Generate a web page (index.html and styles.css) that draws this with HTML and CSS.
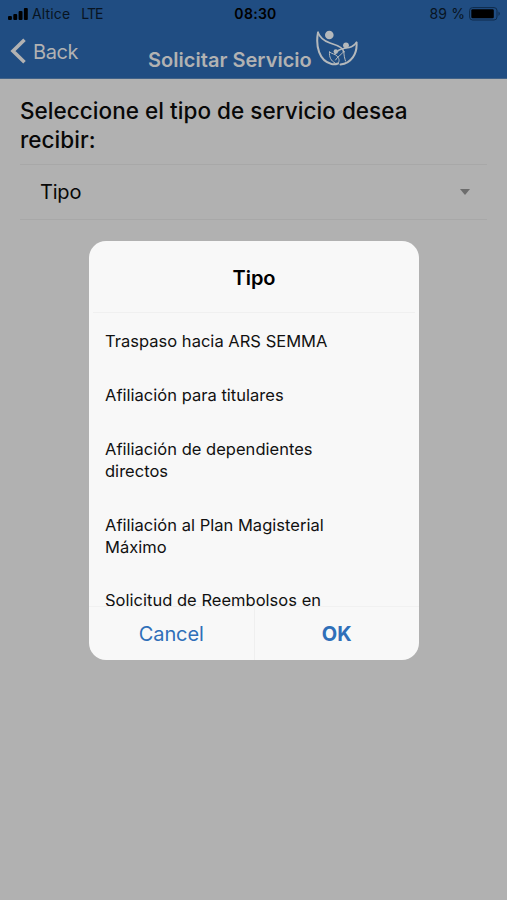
FILE: index.html
```html
<!DOCTYPE html>
<html lang="es">
<head>
<meta charset="utf-8">
<title>Solicitar Servicio</title>
<link rel="stylesheet" href="styles.css">
</head>
<body>
<header class="header">
  <div class="status">
    <div class="status-left">
      <svg class="signal" width="20" height="12" viewBox="0 0 20 12"><rect x="0" y="8" width="3.900" height="4" rx="1"/><rect x="5.300" y="6" width="3.900" height="6" rx="1"/><rect x="10.600" y="3" width="3.900" height="9" rx="1"/><rect x="15.900" y="0" width="3.900" height="12" rx="1"/></svg>
      <span class="carrier">Altice</span>
      <span class="network">LTE</span>
    </div>
    <span class="clock">08:30</span>
    <div class="status-right">
      <span class="charge">89 %</span>
      <svg class="battery" width="32" height="14" viewBox="0 0 32 14"><rect x=".6" y=".6" width="27.4" height="12.4" rx="3" fill="none" stroke="#0e2b4b"/><rect x="2.3" y="2.3" width="22.5" height="9" rx="1.2" fill="#000"/><path d="M29.5 4.6q2.6 2.2 0 4.4z" fill="#0e2b4b"/></svg>
    </div>
  </div>
  <nav class="nav">
    <a class="back">
      <svg width="16" height="26" viewBox="0 0 16 26"><path d="M14.500 1.800L3 13L14.500 24.200" fill="none" stroke="#b2b2b2" stroke-width="3.600"/></svg>
      <span>Back</span>
    </a>
    <div class="brand">
      <h1 class="title">Solicitar Servicio</h1>
      <svg class="logo" width="42" height="37" viewBox="0 0 42 37">
        <g fill="none" stroke="#b5b9bc" stroke-linecap="round" stroke-linejoin="round">
          <path d="M2 2.500C-.5 16 3 31 15.500 34C18 34.700 20 34.300 22 33.500" stroke-width="2"/>
          <path d="M2 2.500C4 8 8 11 14 13C22 15.500 28 18 27.500 21.500" stroke-width="1.800"/>
          <path d="M40.500 12.500C41.500 24 35 33.500 24.500 34.500" stroke-width="2"/>
          <path d="M40.500 12.500C37 17 34 17.500 30 18C24 19 20.500 21 19 24" stroke-width="1.600"/>
          <path d="M13.500 22C13 27 15 31 19 33M13.500 22C16 24 19 24 21 26C23 28 24 31 22 33.500M28 21.500C27.500 25 29 29 29.500 31M28 21.500C25 25 21 27 19.500 30" stroke-width="1"/>
        </g>
        <circle cx="13.300" cy="5" r="4.300" fill="#b5b9bc"/><circle cx="30" cy="15.300" r="2.900" fill="#b5b9bc"/><circle cx="19.800" cy="21.500" r="2.200" fill="#b5b9bc"/>
      </svg>
    </div>
  </nav>
</header>
<main class="page">
  <h2 class="question">Seleccione el tipo de servicio desea recibir:</h2>
  <div class="select"><span>Tipo</span><i class="caret"></i></div>
</main>
<div class="overlay">
  <section class="dialog">
    <h2 class="dialog-title">Tipo</h2>
    <ul class="options">
      <li><span>Traspaso hacia ARS SEMMA</span></li>
      <li><span>Afiliación para titulares</span></li>
      <li><span>Afiliación de dependientes directos</span></li>
      <li><span>Afiliación al Plan Magisterial Máximo</span></li>
      <li><span>Solicitud de Reembolsos en</span></li>
    </ul>
    <div class="actions"><button class="cancel">Cancel</button><button class="ok">OK</button></div>
  </section>
</div>
</body>
</html>
```

FILE: styles.css
```css
* { box-sizing: border-box; }
body {
  margin: 0;
  height: 900px;
  overflow: hidden;
  background: #b1b1b1;
  color: #080808;
  font-family: Inter, "Liberation Sans", sans-serif;
}
h1, h2, ul { margin: 0; padding: 0; }
span, h1, button { white-space: nowrap; }
.header { height: 79px; background: #204d82; border-bottom: 1px solid #416287; }
.status {
  display: grid;
  grid-template-columns: 1fr auto 1fr;
  align-items: center;
  height: 27px;
  padding: 0 6px 0 8px;
  color: #081421;
  font-size: 14px;
}
.status-left, .status-right { display: flex; align-items: center; }
.signal { fill: #000; }
.carrier { margin-left: 4px; letter-spacing: .15px; }
.network { margin-left: 11px; letter-spacing: -.9px; }
.clock { color: #000; font-weight: 600; letter-spacing: .3px; padding-left: 2px; }
.status-right { justify-content: flex-end; }
.charge { margin-right: 4px; letter-spacing: .1px; }
.nav { display: flex; height: 51px; color: #b2b2b2; }
.back { display: flex; align-items: center; width: 148px; height: 48px; padding-left: 10px; font-size: 20px; }
.back span { margin: 1px 0 0 7px; letter-spacing: -.4px; }
.brand { display: flex; }
.title { padding-top: 19px; font-size: 20px; line-height: 28px; font-weight: 600; letter-spacing: .03px; }
.logo { margin: 3px 0 0 4px; }
.page { padding: 17px 20px; }
.question { font-size: 22.5px; line-height: 29px; font-weight: 500; letter-spacing: .04px; width: 420px; }
.select {
  display: flex;
  align-items: center;
  justify-content: space-between;
  height: 56px;
  margin-top: 10px;
  padding: 0 17px 0 20px;
  border: solid #a8a8a8;
  border-width: 1px 0;
  font-size: 20px;
  letter-spacing: -.2px;
}
.caret { border: solid transparent; border-width: 6px 5.5px 0; border-top-color: #6d6d6d; }
.overlay { position: absolute; inset: 0; }
.dialog {
  display: flex;
  flex-direction: column;
  width: 330px;
  height: 419px;
  margin: 241px 0 0 89px;
  overflow: hidden;
  border-radius: 17px;
  background: #f8f8f8;
}
.dialog-title { height: 71px; padding-top: 22px; text-align: center; font-size: 20px; line-height: 30px; font-weight: 600; color: #000; }
.options {
  flex: 1;
  min-height: 0;
  overflow: hidden;
  margin: 0 4px;
  border-top: 1px solid #f0f0f0;
  list-style: none;
}
.options li { padding: 16px 64px 16px 12px; font-size: 16.5px; line-height: 22px; letter-spacing: .02px; color: #111; }
.options li:first-child { padding-top: 17px; }
.options li:last-child { padding: 15px 64px 0 12px; }
.options span { white-space: normal; }
.actions { display: flex; height: 54px; border-top: 1px solid #f1f1f1; }
.actions button { flex: 1; padding: 0; border: 0; background: none; color: #2f6fb9; font: 400 20px Inter, sans-serif; }
.actions .cancel { letter-spacing: -.1px; }
.actions .ok { border-left: 1px solid #efefef; font-weight: 700; }
```
